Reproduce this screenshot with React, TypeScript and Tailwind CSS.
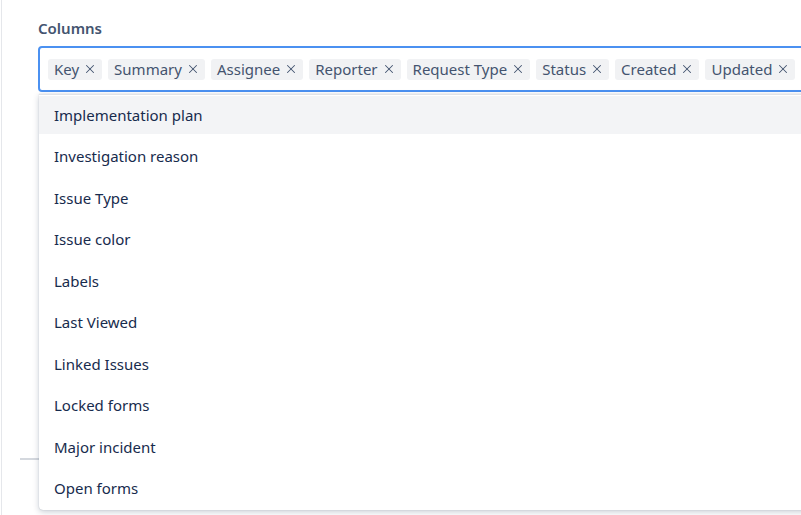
import { X } from "lucide-react";

const chips = ["Key", "Summary", "Assignee", "Reporter", "Request Type", "Status", "Created", "Updated"];

const options = [
  "Implementation plan",
  "Investigation reason",
  "Issue Type",
  "Issue color",
  "Labels",
  "Last Viewed",
  "Linked Issues",
  "Locked forms",
  "Major incident",
  "Open forms",
];

export default function App() {
  return (
    <div className="w-[801px] h-[515px] overflow-hidden bg-white font-['Noto_Sans',sans-serif]">
      <div className="relative h-full ml-px border-l border-[#e5e7eb] pl-[18px]">
        {/* form field */}
        <div className="pl-[18px] pt-[18px]">
          <label className="block text-[15px] font-semibold leading-[20px] text-[#44546f]">Columns</label>
          <div className="mt-[8px] w-[820px] h-[46px] flex items-center gap-[6px] pl-[8px] border-2 border-[#4b91f1] rounded-[4px] overflow-hidden">
            {chips.map((c) => (
              <span
                key={c}
                className="shrink-0 h-[21px] flex items-center gap-[4px] pl-[6px] pr-[5px] rounded-[3px] bg-[#f1f2f4] text-[15px] text-[#44546f] leading-none"
              >
                {c}
                <X size={14} strokeWidth={1.75} className="text-[#44546f]" />
              </span>
            ))}
          </div>
        </div>

        {/* footer divider */}
        <div className="mt-[366px] border-t-2 border-[#d4d8de]" />

        {/* dropdown menu */}
        <div className="absolute left-[37px] top-[94px] w-[820px] pt-px pb-[2px] flex flex-col gap-[3.5px] bg-white rounded-b-[4px] border-t border-[#e2e4e8] shadow-[0_2px_6px_rgba(9,30,66,0.22),0_0_1px_rgba(9,30,66,0.3)]">
          {options.map((o, i) => (
            <div
              key={o}
              className={`h-[38px] shrink-0 flex items-center pl-[15px] text-[15px] text-[#172b4d] ${i === 0 ? "bg-[#f3f4f6]" : ""}`}
            >
              {o}
            </div>
          ))}
        </div>
      </div>
    </div>
  );
}
